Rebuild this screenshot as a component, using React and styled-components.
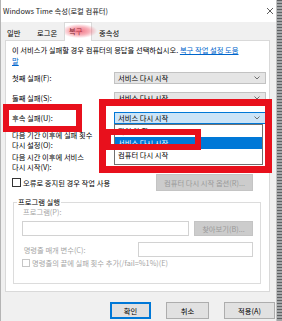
import React from "react";
import styled, { createGlobalStyle } from "styled-components";

const GlobalStyle = createGlobalStyle`
  html, body {
    margin: 0;
    padding: 0;
  }
  body {
    font-family: "Noto Sans CJK KR", "Noto Sans", sans-serif;
    font-size: 7.3px;
    color: #000;
    background: #7a7a7a;
  }
  * {
    box-sizing: border-box;
  }
`;

const RED = "#e8101c";

const Screen = styled.div`
  display: flex;
  width: 282px;
  height: 321px;
  overflow: hidden;
`;

const Window = styled.div`
  display: flex;
  flex-direction: column;
  width: 277px;
  height: 321px;
  background: #f0f0f0;
  border-left: 1px solid #b4b4b4;
  border-right: 1px solid #c4c4c4;
`;

const Desktop = styled.div`
  flex: 1;
  background: repeating-linear-gradient(180deg, #5e6163 0 1px, #a3a6a8 1px 3px);
`;

const TitleBar = styled.div`
  display: flex;
  align-items: center;
  justify-content: space-between;
  height: 22px;
  padding: 0 2px 0 2px;
  background: #fff;
  color: #1a1a1a;
`;

const Body = styled.div`
  flex: 1;
  display: flex;
  flex-direction: column;
  padding: 0 6px 0 4px;
`;

const TabStrip = styled.div`
  display: flex;
  align-items: flex-end;
  height: 18px;
  margin-left: -2px;
`;

const Tab = styled.div`
  position: relative;
  width: ${(p) => p.$w}px;
  height: ${(p) => (p.$active ? 19 : 15)}px;
  padding-left: ${(p) => p.$pl}px;
  line-height: ${(p) => (p.$active ? 17 : 15)}px;
  white-space: nowrap;
  background: ${(p) => (p.$active ? "#fff" : "transparent")};
  border: 1px solid ${(p) => (p.$active ? "#d9d9d9" : "transparent")};
  border-bottom: none;
  margin-bottom: ${(p) => (p.$active ? -1 : 0)}px;
  z-index: ${(p) => (p.$active ? 1 : 0)};

  ${(p) =>
    p.$active &&
    `
    &::after {
      content: "";
      position: absolute;
      left: 0;
      top: 1px;
      width: 32px;
      height: 14px;
      background: radial-gradient(ellipse at 45% 50%, rgba(240, 80, 100, 0.8) 0%, rgba(240, 80, 100, 0.45) 40%, rgba(240, 80, 100, 0) 72%);
    }
  `}
`;

const Panel = styled.div`
  display: flex;
  flex-direction: column;
  height: 252px;
  padding: 4px 3px 0 6px;
  background: #fff;
  border: 1px solid #d9d9d9;
`;

const Intro = styled.p`
  margin: 0;
  line-height: 11px;
  white-space: nowrap;
`;

const HelpLink = styled.span`
  color: #0066cc;
  text-decoration: underline;
`;

const FailureRow = styled.div`
  display: grid;
  grid-template-columns: 102px 152px;
  align-items: stretch;
  height: 12px;
  margin-top: ${(p) => p.$gap}px;
`;

const RowLabel = styled.div`
  position: relative;
  display: flex;
  align-items: center;
  white-space: nowrap;
`;

const SelectWrap = styled.div`
  position: relative;
`;

const Select = styled.div`
  display: flex;
  align-items: center;
  justify-content: space-between;
  height: 100%;
  padding: 0 5px 0 3px;
  background: ${(p) => (p.$open ? "#cce4f7" : "#e5e5e5")};
  border: 1px solid ${(p) => (p.$open ? "#0078d7" : "#c2c2c2")};
`;

const DropList = styled.div`
  position: absolute;
  top: 100%;
  left: 0;
  width: 149px;
  padding-bottom: 3px;
  background: #fff;
  border: 1px solid #707070;
  z-index: 2;
`;

const Option = styled.div`
  height: 12px;
  line-height: 12px;
  padding-left: 3px;
  background: ${(p) => (p.$selected ? "#0078d7" : "transparent")};
  color: ${(p) => (p.$selected ? "#fff" : "#000")};
`;

const Marker = styled.div`
  position: absolute;
  left: ${(p) => p.$x}px;
  top: ${(p) => p.$y}px;
  width: ${(p) => p.$w}px;
  height: ${(p) => p.$h}px;
  border: ${(p) => p.$t}px solid ${RED};
  z-index: 3;
  pointer-events: none;
`;

const TwoLineLabel = styled.div`
  margin-top: ${(p) => p.$gap}px;
  line-height: 10px;
  white-space: nowrap;
`;

const CheckRow = styled.div`
  display: flex;
  align-items: center;
  height: ${(p) => p.$h}px;
  margin-top: ${(p) => p.$gap}px;
  color: ${(p) => (p.$disabled ? "#a6a6a6" : "#000")};
  white-space: nowrap;
`;

const CheckBox = styled.span`
  width: ${(p) => p.$size}px;
  height: ${(p) => p.$size}px;
  margin-right: 2px;
  background: #fff;
  border: 1px solid ${(p) => (p.$disabled ? "#c6c6c6" : "#333")};
  flex: none;
`;

const GhostButton = styled.div`
  display: flex;
  align-items: center;
  justify-content: center;
  width: ${(p) => p.$w}px;
  height: ${(p) => p.$h}px;
  margin-left: auto;
  margin-right: ${(p) => p.$mr || 0}px;
  background: #cccccc;
  border: 1px solid #c4c4c4;
  color: #9a9a9a;
  white-space: nowrap;
  flex: none;
`;

const GroupBox = styled.fieldset`
  margin: 6px 5px 0 1px;
  padding: 0 7px 16px 8px;
  border: 1px solid #dcdcdc;
  min-inline-size: 0;
`;

const GroupTitle = styled.legend`
  margin-left: -5px;
  padding: 0 1px;
  line-height: 10px;
`;

const Hint = styled.div`
  line-height: 10px;
  padding-left: 1px;
  color: #a6a6a6;
  white-space: nowrap;
`;

const FieldRow = styled.div`
  display: flex;
  align-items: center;
  gap: 5px;
  height: 15px;
  margin-top: ${(p) => p.$gap}px;
  color: #a6a6a6;
  white-space: nowrap;
`;

const TextBox = styled.div`
  flex: ${(p) => (p.$w ? "none" : 1)};
  width: ${(p) => (p.$w ? `${p.$w}px` : "auto")};
  margin-left: ${(p) => (p.$w ? "auto" : 0)};
  height: 100%;
  background: #fff;
  border: 1px solid #d2d2d2;
`;

const Footer = styled.div`
  display: flex;
  justify-content: flex-end;
  gap: 15px;
  margin: 10px -5px 0 0;
`;

const DialogButton = styled.div`
  display: flex;
  align-items: center;
  justify-content: center;
  width: ${(p) => p.$w}px;
  height: 17px;
  background: #e1e1e1;
  border: 1px solid ${(p) => (p.$default ? "#0078d7" : "#adadad")};
  box-shadow: ${(p) => (p.$default ? "inset 0 0 0 1px #0078d7" : "none")};
`;

function Chevron() {
  return (
    <svg width="6" height="4" viewBox="0 0 6 4">
      <polyline points="0.5,0.5 3,3 5.5,0.5" fill="none" stroke="#606060" strokeWidth="0.9" />
    </svg>
  );
}

function CloseIcon() {
  return (
    <svg width="8" height="8" viewBox="0 0 8 8">
      <path d="M1 1 L7 7 M7 1 L1 7" stroke="#333" strokeWidth="0.8" />
    </svg>
  );
}

function FailureSelect({ label, gap, open, children }) {
  return (
    <FailureRow $gap={gap}>
      <RowLabel>
        {label}
        {open && <Marker $x={-9} $y={-8} $w={79} $h={28} $t={6} />}
      </RowLabel>
      <SelectWrap>
        <Select $open={open}>
          <span>서비스 다시 시작</span>
          <Chevron />
        </Select>
        {children}
      </SelectWrap>
    </FailureRow>
  );
}

export default function App() {
  return (
    <Screen>
      <GlobalStyle />
      <Window>
        <TitleBar>
          <span>Windows Time 속성(로컬 컴퓨터)</span>
          <CloseIcon />
        </TitleBar>
        <Body>
          <TabStrip>
            <Tab $w={27} $pl={3}>일반</Tab>
            <Tab $w={34} $pl={6}>로그온</Tab>
            <Tab $w={28} $pl={4} $active>복구</Tab>
            <Tab $w={32} $pl={6}>종속성</Tab>
          </TabStrip>
          <Panel>
            <Intro>
              이 서비스가 실패할 경우 컴퓨터의 응답을 선택하십시오. <HelpLink>복구 작업 설정 도움</HelpLink>
              <br />
              <HelpLink>말</HelpLink>
            </Intro>
            <FailureSelect label="첫째 실패(F):" gap={5} />
            <FailureSelect label="둘째 실패(S):" gap={8} />
            <FailureSelect label="후속 실패(U):" gap={8} open>
              <DropList>
                <Option>작업 안 함</Option>
                <Option $selected>서비스 다시 시작</Option>
                <Option>컴퓨터 다시 시작</Option>
              </DropList>
              <Marker $x={-15} $y={-13} $w={173} $h={74} $t={7} />
              <Marker $x={-9} $y={17} $w={96} $h={21} $t={6} />
            </FailureSelect>
            <TwoLineLabel $gap={6}>
              다음 기간 이후에 실패 횟수
              <br />
              다시 설정(O):
            </TwoLineLabel>
            <TwoLineLabel $gap={2}>
              다음 시간 이후에 서비스
              <br />
              다시 시작(V):
            </TwoLineLabel>
            <CheckRow $h={17} $gap={2}>
              <CheckBox $size={9} />
              오류로 중지된 경우 작업 사용
              <GhostButton $w={97} $h={17} $mr={13}>
                컴퓨터 다시 시작 옵션(R)...
              </GhostButton>
            </CheckRow>
            <GroupBox>
              <GroupTitle>프로그램 실행</GroupTitle>
              <Hint>프로그램(P):</Hint>
              <FieldRow $gap={4}>
                <TextBox />
                <GhostButton $w={59} $h={15}>
                  찾아보기(B)...
                </GhostButton>
              </FieldRow>
              <FieldRow $gap={6}>
                <span>&nbsp;명령줄 매개 변수(C):</span>
                <TextBox $w={115} />
              </FieldRow>
              <CheckRow $h={9} $gap={1} $disabled>
                <CheckBox $size={8} $disabled />
                명령줄의 끝에 실패 횟수 추가(/fail=%1%)(E)
              </CheckRow>
            </GroupBox>
          </Panel>
          <Footer>
            <DialogButton $w={41} $default>
              확인
            </DialogButton>
            <DialogButton $w={43}>취소</DialogButton>
            <DialogButton $w={51}>적용(A)</DialogButton>
          </Footer>
        </Body>
      </Window>
      <Desktop />
    </Screen>
  );
}
